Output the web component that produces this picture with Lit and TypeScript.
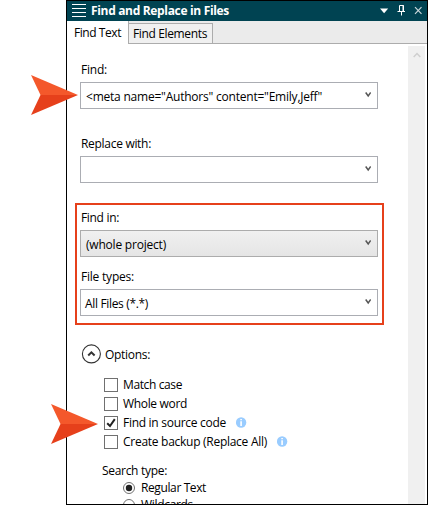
import { LitElement, html, css, svg, nothing } from "lit";
import { customElement, property } from "lit/decorators.js";
import { classMap } from "lit/directives/class-map.js";

/** A single line of text whose tracking is adjusted to fill a given width. */
@customElement("fit-text")
class FitText extends LitElement {
  @property() text = "";
  @property({ type: Number }) width = 0;

  static styles = css`
    :host { display: inline-block; white-space: pre; }
  `;

  render() {
    return html`<span>${this.text}</span>`;
  }

  updated() {
    const span = this.renderRoot.querySelector("span") as HTMLElement;
    span.style.letterSpacing = "0px";
    const natural = span.getBoundingClientRect().width;
    span.style.letterSpacing = (this.width - natural) / this.text.length + "px";
  }
}

/** Combo box with its caption above. */
@customElement("combo-field")
class ComboField extends LitElement {
  @property() label = "";
  @property({ type: Number }) labelWidth = 0;
  @property() value = "";
  @property({ type: Number }) valueWidth = 0;
  @property({ type: Boolean }) shaded = false;
  @property({ type: Boolean }) editable = false;

  static styles = css`
    :host { display: block; }
    .label { height: 20px; line-height: 16px; padding-left: 1px; }
    .box {
      box-sizing: border-box; width: 298px; height: 27px;
      border: 1px solid #abadb3; background: #fff;
      display: flex; align-items: center; justify-content: space-between;
      padding: 0 6px 0 4px; line-height: 16px;
    }
    .editable { padding-left: 5px; }
    .shaded { background: linear-gradient(#f0f0f0, #e5e5e5); padding-left: 5px; border-color: #acacac; }
    .text { padding-top: 2px; }
    svg { display: block; margin-top: -1px; }
  `;

  render() {
    return html`
      <div class="label"><fit-text .text=${this.label} .width=${this.labelWidth}></fit-text></div>
      <div class=${classMap({ box: true, shaded: this.shaded, editable: this.editable })}>
        <span class="text">${this.value
          ? html`<fit-text .text=${this.value} .width=${this.valueWidth}></fit-text>`
          : nothing}</span>
        <svg width="6" height="6" viewBox="0 0 6 6">
          <path d="M.7 .5L3.200 4L5.700 .5" fill="none" stroke="#555" stroke-width="1.500" />
        </svg>
      </div>
    `;
  }
}

const pointer = svg`
  <path d="M0 0L47 20L9.500 20Z" fill="#f4582b" />
  <path d="M0 40L47 20L9.500 20Z" fill="#e6401b" />
`;

const checks = [
  { text: "Match case", width: 59, checked: false, info: false },
  { text: "Whole word", width: 64, checked: false, info: false },
  { text: "Find in source code", width: 103, checked: true, info: true },
  { text: "Create backup (Replace All)", width: 144, checked: false, info: true },
];

const radios = [
  { text: "Regular Text", width: 65, on: true },
  { text: "Wildcards", width: 52, on: false },
];

@customElement("app-root")
class AppRoot extends LitElement {
  static styles = css`
    :host {
      display: block; position: relative; width: 428px; height: 505px;
      overflow: hidden; background: #fff; color: #000;
      font: 12px/16px "Open Sans", "Noto Sans", sans-serif;
    }
    .window {
      box-sizing: border-box; width: 362px; height: 505px; margin-left: 66px;
      border: 1px solid #000; overflow: hidden;
      display: flex; flex-direction: column;
    }
    .title {
      flex: none; height: 20px; background: #004352; color: #fff; font-weight: 700;
      display: flex; align-items: center; padding: 0 4px 0 5px;
    }
    .title svg { display: block; }
    .title .name { flex: 1; padding-left: 5px; }
    .tabs {
      flex: none; box-sizing: border-box; height: 23px; background: #ebebeb;
      border-bottom: 1px solid #acacac; display: flex; align-items: flex-end;
    }
    .tab { box-sizing: border-box; border-right: 1px solid #acacac; }
    .tab.active { background: #fff; width: 62px; height: 23px; margin-bottom: -1px; padding: 4px 0 0 7px; }
    .tab.idle { background: #f0f0f0; width: 84px; height: 20px; border-top: 1px solid #acacac; padding: 2px 0 0 4px; }
    .body { flex: 1; min-height: 0; display: flex; justify-content: space-between; overflow: hidden; }
    .form { padding-left: 8px; width: 320px; }
    .plain { margin-left: 5px; }
    .first { margin-top: 18px; }
    .second { margin-top: 27px; }
    .group {
      box-sizing: border-box; width: 309px; height: 122px; margin-top: 20px;
      border: 2px solid #e6401b; padding: 5px 0 0 3px;
    }
    .group combo-field + combo-field { margin-top: 12px; }
    .options { display: flex; align-items: center; gap: 4px; margin: 19px 0 0 6px; height: 21px; }
    .options svg { display: block; margin-top: -1px; }
    .checks { margin: 10px 0 0 29px; }
    .row { display: flex; align-items: center; height: 19px; }
    .box { box-sizing: border-box; width: 14px; height: 14px; border: 1px solid #707070; margin-right: 5px; flex: none; }
    .box svg { display: block; }
    .info { margin-left: 10px; }
    .search { margin: 12px 0 0 27px; height: 16px; }
    .radios { margin: 0 0 0 48px; }
    .radio { display: flex; align-items: center; gap: 6px; height: 17px; }
    .scroll { width: 17px; margin: 2px 2px 0 0; background: #f0f0f0; padding-top: 6px; box-sizing: border-box; }
    .scroll svg { display: block; margin: 0 auto; }
    .pointer { position: absolute; display: block; }
    .at-find { left: 31px; top: 75px; }
    .at-source { left: 51px; top: 404px; }
  `;

  render() {
    return html`
      <div class="window">
        <div class="title">
          <svg width="14" height="14" viewBox="0 0 14 14">
            <path d="M0 .5H14M0 4.500H14M0 8.500H14M0 12.500H14" stroke="#fff" />
          </svg>
          <span class="name"><fit-text .text=${"Find and Replace in Files"} .width=${138}></fit-text></span>
          <svg width="43" height="12" viewBox="0 0 43 12">
            <path d="M0 3.500H8.200L4.100 8.300Z" fill="#fff" />
            <path d="M19.500 6V.5H23.500V6M17.500 6.500H25M21.500 7V10.500" fill="none" stroke="#fff" />
            <path d="M23 0V6" stroke="#fff" />
            <path d="M35 2.200L41.500 8.800M41.500 2.200L35 8.800" stroke="#c9d6da" stroke-width="1.200" />
          </svg>
        </div>
        <div class="tabs">
          <div class="tab active"><fit-text .text=${"Find Text"} .width=${47}></fit-text></div>
          <div class="tab idle"><fit-text .text=${"Find Elements"} .width=${74}></fit-text></div>
        </div>
        <div class="body">
          <div class="form">
            <combo-field class="plain first" editable label="Find:" .labelWidth=${26}
              value='<meta name="Authors" content="Emily,Jeff"' .valueWidth=${236}></combo-field>
            <combo-field class="plain second" label="Replace with:" .labelWidth=${70}></combo-field>
            <div class="group">
              <combo-field shaded label="Find in:" .labelWidth=${38}
                value="(whole project)" .valueWidth=${80}></combo-field>
              <combo-field label="File types:" .labelWidth=${53}
                value="All Files (*.*)" .valueWidth=${63}></combo-field>
            </div>
            <div class="options">
              <svg width="20" height="20" viewBox="0 0 20 20">
                <circle cx="10.400" cy="9.900" r="9" fill="#fff" stroke="#333" stroke-width="1.100" />
                <path d="M7.200 11.500L10.400 8.300L13.600 11.500" fill="none" stroke="#333" stroke-width="2" />
              </svg>
              <fit-text .text=${"Options:"} .width=${45}></fit-text>
            </div>
            <div class="checks">
              ${checks.map((c) => html`
                <div class="row">
                  <span class="box">${c.checked
                    ? html`<svg width="12" height="12" viewBox="0 0 12 12">
                        <path d="M2.200 6.300L5 9L9.800 2.200" fill="none" stroke="#212121" stroke-width="2" />
                      </svg>`
                    : nothing}</span>
                  <fit-text .text=${c.text} .width=${c.width}></fit-text>
                  ${c.info
                    ? html`<svg class="info" width="11" height="11" viewBox="0 0 11 11">
                        <circle cx="5.100" cy="5.500" r="5.200" fill="#99ccff" />
                        <path d="M4.300 2H5.900V3.300H4.300ZM4.300 4.300H5.900V9H4.300Z" fill="#fff" />
                      </svg>`
                    : nothing}
                </div>`)}
            </div>
            <div class="search"><fit-text .text=${"Search type:"} .width=${65}></fit-text></div>
            <div class="radios">
              ${radios.map((r) => html`
                <div class="radio">
                  <svg width="12" height="12" viewBox="0 0 12 12">
                    <circle cx="6" cy="6" r="5.500" fill="#fff" stroke="#707070" />
                    ${r.on ? svg`<circle cx="6" cy="6" r="3.200" fill="#212121" />` : nothing}
                  </svg>
                  <fit-text .text=${r.text} .width=${r.width}></fit-text>
                </div>`)}
            </div>
          </div>
          <div class="scroll">
            <svg width="8" height="6" viewBox="0 0 8 6">
              <path d="M.7 5L4 1.500L7.300 5" fill="none" stroke="#cfcfcf" stroke-width="1.500" />
            </svg>
          </div>
        </div>
      </div>
      <svg class="pointer at-find" width="47" height="40" viewBox="0 0 47 40">${pointer}</svg>
      <svg class="pointer at-source" width="47" height="40" viewBox="0 0 47 40">${pointer}</svg>
    `;
  }
}
